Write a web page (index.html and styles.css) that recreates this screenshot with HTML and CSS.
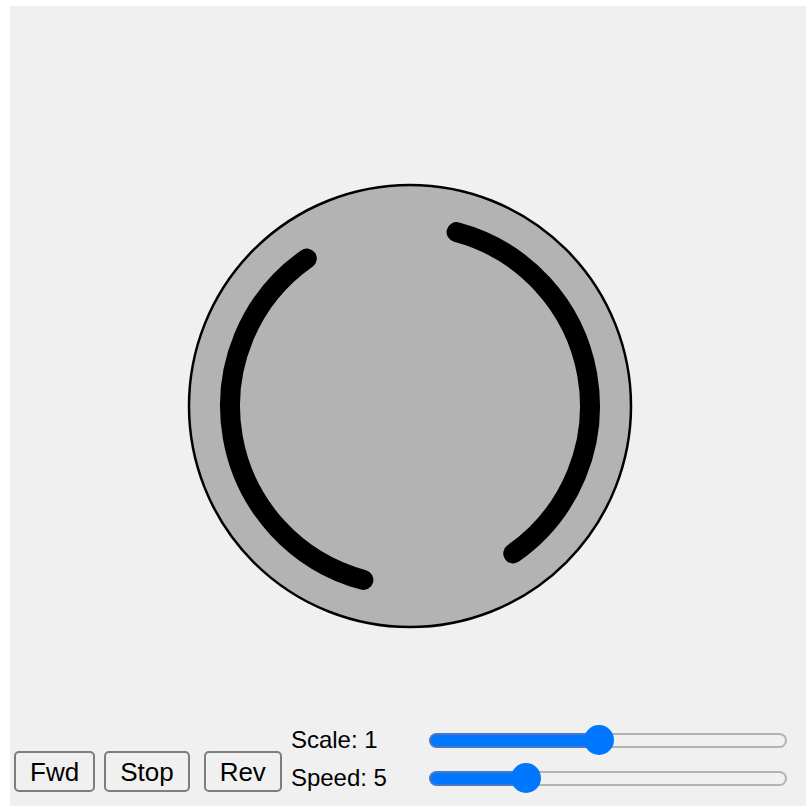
FILE: index.html
```html
<!DOCTYPE html>
<html>
<head>
<meta charset="utf-8">
<link rel="stylesheet" href="styles.css">
</head>
<body>
<div class="stage">
  <svg class="canvas" width="800" height="715" viewBox="0 0 800 715">
    <circle cx="400" cy="400" r="221" fill="#b3b3b3" stroke="#000" stroke-width="2.5"/>
    <path d="M 353.4 573.9 A 180 180 0 0 1 296.8 252.6" fill="none" stroke="#000" stroke-width="20" stroke-linecap="round"/>
    <path d="M 446.6 226.1 A 180 180 0 0 1 503.2 547.4" fill="none" stroke="#000" stroke-width="20" stroke-linecap="round"/>
  </svg>
  <div class="controls">
    <div class="buttons">
      <button class="btn btn-fwd">Fwd</button>
      <button class="btn btn-stop">Stop</button>
      <button class="btn btn-rev">Rev</button>
    </div>
    <div class="sliders">
      <span class="label">Scale: 1</span>
      <div class="slider" style="--p: 47.6%; --t: 155px"><div class="track"></div><div class="thumb"></div></div>
      <span class="label">Speed: 5</span>
      <div class="slider" style="--p: 27.1%; --t: 82px"><div class="track"></div><div class="thumb"></div></div>
    </div>
  </div>
</div>
</body>
</html>
```
FILE: styles.css
```css
html, body {
  margin: 0;
  padding: 0;
  background: #ffffff;
}

.stage {
  margin: 6px 0 0 10px;
  width: 796px;
  height: 800px;
  background: #f0f0f0;
  overflow: hidden;
  display: flex;
  flex-direction: column;
  font-family: "Liberation Sans", Arial, sans-serif;
}

.canvas {
  display: block;
  flex: none;
}

.controls {
  display: flex;
  align-items: flex-end;
  height: 76px;
}

.buttons {
  display: flex;
  align-items: center;
  margin-left: 4px;
  margin-bottom: 5px;
}

.btn {
  font-family: "Liberation Sans", Arial, sans-serif;
  font-size: 26px;
  height: 41px;
  padding: 0 14px;
  border: 2px solid #7d7d7d;
  border-radius: 5px;
  background: #f0f0f0;
  color: #000;
  margin: 0;
  line-height: 1;
}

.btn-stop {
  margin-left: 9px;
}

.btn-rev {
  margin-left: 14px;
}

.sliders {
  display: grid;
  grid-template-columns: 138px 358px;
  grid-template-rows: 38px 38px;
  align-items: center;
  margin-left: 9px;
  align-self: flex-start;
}

.label {
  font-size: 24px;
  color: #000;
  white-space: nowrap;
}

.slider {
  position: relative;
  width: 358px;
  height: 30px;
  display: flex;
  align-items: center;
}

.track {
  width: 100%;
  height: 15px;
  box-sizing: border-box;
  border: 2px solid transparent;
  border-radius: 8px;
  background:
    linear-gradient(to right, #0077ff var(--p), #f0f0f0 var(--p)) padding-box,
    linear-gradient(to right, #4a76c4 var(--p), #b3b3b3 var(--p)) border-box;
}

.thumb {
  position: absolute;
  top: 0;
  left: var(--t);
  width: 30px;
  height: 30px;
  border-radius: 50%;
  background: #0077ff;
}
```
